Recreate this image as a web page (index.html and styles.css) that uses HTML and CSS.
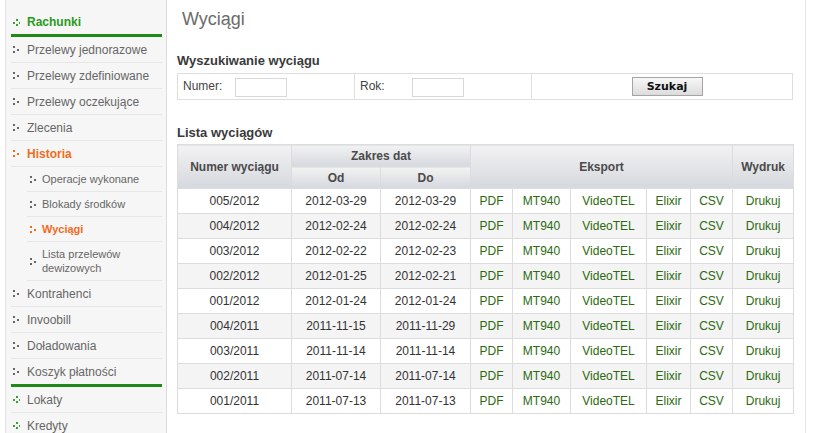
FILE: index.html
```html
<!DOCTYPE html>
<html lang="pl">
<head>
  <meta charset="UTF-8">
  <title>Wyciągi</title>
  <link rel="stylesheet" href="styles.css">
</head>
<body>
  <div class="page">
    <ul class="menu">
      <li class="item top green-line"><span class="dot dot-green"></span>Rachunki</li>
      <li class="item"><span class="dot"></span>Przelewy jednorazowe</li>
      <li class="item"><span class="dot"></span>Przelewy zdefiniowane</li>
      <li class="item"><span class="dot"></span>Przelewy oczekujące</li>
      <li class="item"><span class="dot"></span>Zlecenia</li>
      <li class="item active"><span class="dot dot-orange"></span>Historia</li>
      <li class="item sub"><span class="dot"></span>Operacje wykonane</li>
      <li class="item sub"><span class="dot"></span>Blokady środków</li>
      <li class="item sub active"><span class="dot dot-orange"></span>Wyciągi</li>
      <li class="item sub two"><span class="dot"></span><span>Lista przelewów<br>dewizowych</span></li>
      <li class="item"><span class="dot"></span>Kontrahenci</li>
      <li class="item"><span class="dot"></span>Invoobill</li>
      <li class="item"><span class="dot"></span>Doładowania</li>
      <li class="item green-line"><span class="dot"></span>Koszyk płatności</li>
      <li class="item"><span class="dot dot-green"></span>Lokaty</li>
      <li class="item"><span class="dot dot-green"></span>Kredyty</li>
    </ul>

    <div class="main">
      <h1>Wyciągi</h1>

      <h2>Wyszukiwanie wyciągu</h2>
      <table class="search">
        <tr>
          <td class="c1">Numer: <input type="text" class="field"></td>
          <td class="c2">Rok: <input type="text" class="field"></td>
          <td class="c3"><button type="button">Szukaj</button></td>
        </tr>
      </table>

      <h2 class="list-title">Lista wyciągów</h2>
      <table class="list">
        <colgroup>
          <col style="width:114px"><col style="width:89px"><col style="width:90px">
          <col style="width:42px"><col style="width:58px"><col style="width:76px">
          <col style="width:44px"><col style="width:42px"><col style="width:61px">
        </colgroup>
        <thead>
          <tr class="h1">
            <th rowspan="2">Numer wyciągu</th>
            <th colspan="2">Zakres dat</th>
            <th colspan="5" rowspan="2">Eksport</th>
            <th rowspan="2">Wydruk</th>
          </tr>
          <tr class="h2">
            <th>Od</th>
            <th>Do</th>
          </tr>
        </thead>
        <tbody id="rows"></tbody>
      </table>
    </div>
  </div>

  <script>
    // lista wyciągów
    const statements = [
      ['005/2012', '2012-03-29', '2012-03-29'],
      ['004/2012', '2012-02-24', '2012-02-24'],
      ['003/2012', '2012-02-22', '2012-02-23'],
      ['002/2012', '2012-01-25', '2012-02-21'],
      ['001/2012', '2012-01-24', '2012-01-24'],
      ['004/2011', '2011-11-15', '2011-11-29'],
      ['003/2011', '2011-11-14', '2011-11-14'],
      ['002/2011', '2011-07-14', '2011-07-14'],
      ['001/2011', '2011-07-13', '2011-07-13']
    ];
    const links = ['PDF', 'MT940', 'VideoTEL', 'Elixir', 'CSV', 'Drukuj'];
    const tbody = document.getElementById('rows');

    statements.forEach(s => {
      const tr = document.createElement('tr');
      s.forEach(v => {
        const td = document.createElement('td');
        td.textContent = v;
        tr.appendChild(td);
      });
      links.forEach(l => {
        const td = document.createElement('td');
        const a = document.createElement('a');
        a.href = '#';
        a.textContent = l;
        td.appendChild(a);
        tr.appendChild(td);
      });
      tbody.appendChild(tr);
    });
  </script>
</body>
</html>
```

FILE: styles.css
```css
body {
  margin: 0;
  font-family: 'Liberation Sans', Arial, sans-serif;
  background-color: #fff;
  color: #333;
}
.page {
  display: flex;
  align-items: flex-start;
  height: 433px;
  overflow: hidden;
}

/* menu */
.menu {
  list-style: none;
  margin: 0 0 0 5px;
  padding: 10px 4px 0 5px;
  width: 151px;
  height: 600px;
  background-color: #f6f6f6;
  border-left: 1px solid #e2e2e2;
  border-right: 1px solid #dcdcdc;
  flex-shrink: 0;
}
.item {
  display: flex;
  align-items: center;
  height: 25px;
  border-bottom: 1px solid #e6e6e6;
  font-size: 12px;
  color: #666;
}
.item.top {
  height: 24px;
  color: #2b9a21;
  font-weight: bold;
}
.item.green-line {
  border-bottom: 3px solid #1f8a1a;
}
.item.active {
  color: #f36b1c;
  font-weight: bold;
}
.item.sub {
  margin-left: 16px;
  font-size: 11px;
  height: 24px;
}
.item.sub.two {
  height: auto;
  padding-top: 5px;
  padding-bottom: 5px;
  line-height: 14px;
}
.dot {
  width: 6px;
  height: 7px;
  margin: 0 8px 0 2px;
  flex-shrink: 0;
  background:
    radial-gradient(circle, #666 0.9px, transparent 1.1px) 0 0 / 2px 2px no-repeat,
    radial-gradient(circle, #666 0.9px, transparent 1.1px) 0 5px / 2px 2px no-repeat,
    radial-gradient(circle, #666 0.9px, transparent 1.1px) 4px 3px / 2px 2px no-repeat;
}
.dot-orange {
  background:
    radial-gradient(circle, #f36b1c 0.9px, transparent 1.1px) 0 0 / 2px 2px no-repeat,
    radial-gradient(circle, #f36b1c 0.9px, transparent 1.1px) 0 5px / 2px 2px no-repeat,
    radial-gradient(circle, #f36b1c 0.9px, transparent 1.1px) 4px 3px / 2px 2px no-repeat;
}
.dot-green {
  width: 7px;
  margin-right: 7px;
  background:
    radial-gradient(circle, #3aa02e 0.9px, transparent 1.1px) 0 3px / 2px 2px no-repeat,
    radial-gradient(circle, #3aa02e 0.9px, transparent 1.1px) 3px 0 / 2px 2px no-repeat,
    radial-gradient(circle, #3aa02e 0.9px, transparent 1.1px) 3px 5px / 2px 2px no-repeat,
    radial-gradient(circle, #3aa02e 0.9px, transparent 1.1px) 6px 3px / 2px 2px no-repeat;
}
.item.sub .dot {
  margin-left: 3px;
  margin-right: 6px;
}

/* content */
.main {
  width: 616px;
  padding: 0 12px 0 10px;
  height: 600px;
  border-right: 1px solid #e4e4e4;
}
h1 {
  margin: 9px 0 0 5px;
  font-size: 18px;
  font-weight: normal;
  color: #6b6b6b;
  line-height: 20px;
}
h2 {
  margin: 24px 0 4px 0;
  font-size: 13px;
  font-weight: bold;
  color: #3a3a3a;
  line-height: 16px;
}
.list-title {
  margin-top: 25px;
  margin-bottom: 3px;
}
table {
  border-collapse: collapse;
  width: 616px;
}
.search td {
  border: 1px solid #dedede;
  height: 25px;
  padding: 0 0 0 5px;
  font-size: 12px;
  color: #444;
}
.search .c1, .search .c2 {
  width: 171px;
}
.field {
  width: 50px;
  height: 17px;
  padding: 0;
  margin: 1px 0 0 9px;
  border: 1px solid #d8d8d8;
  vertical-align: middle;
}
.search .c2 .field {
  margin-left: 24px;
}
.search .c3 {
  text-align: center;
  padding-left: 10px;
}
.search button {
  width: 71px;
  height: 19px;
  padding: 0;
  font-family: 'DejaVu Sans', Verdana, sans-serif;
  font-size: 11px;
  font-weight: bold;
  color: #111;
  border: 1px solid #a5a5a5;
  background: linear-gradient(#f7f7f7, #dcdcdc);
  vertical-align: middle;
}

.list {
  table-layout: fixed;
  font-size: 12px;
}
.list th {
  border: 1px solid #dcdcdc;
  font-weight: bold;
  color: #4a4a4a;
  background: linear-gradient(#f2f2f2, #d5d8de);
  padding: 0;
}
.list .h1 th {
  height: 21px;
}
.list .h2 th {
  height: 21px;
}
.list td {
  border: 1px solid #dcdcdc;
  height: 24px;
  padding: 0;
  text-align: center;
  color: #333;
}
.list tbody tr:nth-child(even) td {
  background-color: #f4f4f4;
}
.list a {
  color: #2b6a0e;
  text-decoration: none;
}
```
